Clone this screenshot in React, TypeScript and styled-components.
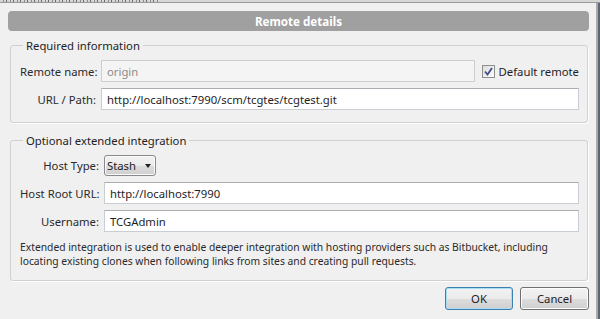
import styled, { createGlobalStyle } from 'styled-components';

const GlobalStyle = createGlobalStyle`
  html, body {
    margin: 0;
    padding: 0;
    background: #f0f0f0;
  }
  body {
    font-family: "Noto Sans", "Open Sans", sans-serif;
    font-size: 11.3px;
    color: #1e1e1e;
  }
`;

const Screen = styled.div`
  width: 600px;
  height: 319px;
  display: flex;
  flex-direction: column;
  overflow: hidden;
`;

// the window behind the dialog, only its last few pixels show
const BehindStrip = styled.div`
  height: 3px;
  background:
    repeating-linear-gradient(90deg, transparent 0 3px, #8a8a8a 3px 4px, transparent 4px 6px, #6a6a6a 6px 7px) 0 0 / 160px 2px no-repeat,
    #d6d6d6;
  border-bottom: 1px solid #9a9a9a;
  box-sizing: border-box;
`;

const Window = styled.div`
  flex: 1;
  display: flex;
`;

const Dialog = styled.div`
  flex: 1;
  display: flex;
  flex-direction: column;
  padding: 8px 7px 0 8px;
`;

const WindowEdge = styled.div`
  width: 4px;
  border-left: 2px solid #a9a9a9;
  background: #5c6570;
  box-sizing: border-box;
`;

const TitleBar = styled.div`
  height: 20px;
  border-radius: 4px;
  background: #a0a0a0;
  color: #fff;
  font-weight: bold;
  font-size: 11.6px;
  display: flex;
  align-items: center;
  justify-content: center;
`;

const Group = styled.fieldset<{ $top: number }>`
  margin: ${(p) => p.$top}px 1px 0 2px;
  min-width: 0;
  border: 1px solid #d0d0d0;
  border-radius: 3px;
  box-shadow: 1px 1px 0 #fff;
  padding: 7px 8px 12px 9px;
`;

const Legend = styled.legend`
  padding: 0 3px;
  margin-left: 3px;
  line-height: 15px;
  color: #1e1e1e;
`;

const FormGrid = styled.div<{ $labelWidth: number }>`
  display: grid;
  grid-template-columns: ${(p) => p.$labelWidth}px 1fr auto;
  column-gap: 5px;
  row-gap: 6px;
  align-items: center;
`;

const Label = styled.label`
  text-align: right;
  white-space: nowrap;
  color: #2a2a2a;
`;

const TextBox = styled.input<{ $span?: number }>`
  grid-column: span ${(p) => p.$span ?? 1};
  height: 22px;
  box-sizing: border-box;
  border: 1px solid #c9cdd4;
  border-top-color: #abadb3;
  background: #fff;
  padding: 0 5px;
  font: inherit;
  color: #1e1e1e;
  outline: none;

  &:disabled {
    background: #f4f4f4;
    border-color: #cdcdcd;
    color: #8c8c8c;
  }
`;

const CheckLabel = styled.label`
  display: flex;
  align-items: center;
  gap: 4px;
  margin-left: 2px;
  white-space: nowrap;
`;

const CheckBox = styled.span`
  width: 13px;
  height: 13px;
  box-sizing: border-box;
  border: 1px solid #8e8f8f;
  background: linear-gradient(135deg, #dcdcdc, #fdfdfd);
  display: flex;
  align-items: center;
  justify-content: center;
`;

const SelectCell = styled.div`
  grid-column: span 2;
`;

const Select = styled.div`
  width: 52px;
  height: 21px;
  box-sizing: border-box;
  border: 1px solid #8a8a8a;
  border-radius: 3px;
  background: linear-gradient(#f2f2f2 0%, #ebebeb 50%, #dddddd 51%, #cfcfcf 100%);
  box-shadow: inset 0 0 0 1px #fafafa;
  display: flex;
  align-items: center;
  justify-content: space-between;
  padding: 0 4px 0 2px;
`;

const Arrow = styled.span`
  width: 0;
  height: 0;
  border-left: 3.5px solid transparent;
  border-right: 3.5px solid transparent;
  border-top: 4px solid #222;
`;

const Note = styled.p`
  margin: 8px 0 0 0;
  font-size: 10.3px;
  line-height: 14px;
  color: #2a2a2a;

  span {
    display: block;
    white-space: nowrap;
  }
`;

const Buttons = styled.div`
  display: flex;
  justify-content: flex-end;
  gap: 7px;
  margin-top: 6px;
`;

const Button = styled.button<{ $primary?: boolean }>`
  width: ${(p) => (p.$primary ? 68 : 69)}px;
  height: 23px;
  border-radius: 3px;
  border: 1px solid ${(p) => (p.$primary ? '#3c7fb1' : '#707070')};
  background: linear-gradient(#f2f2f2 0%, #ebebeb 50%, #dddddd 51%, #cfcfcf 100%);
  box-shadow: inset 0 0 0 1px ${(p) => (p.$primary ? '#a8def4' : '#fcfcfc')};
  font: inherit;
  color: #1e1e1e;
  padding: 0;
`;

function App() {
  return (
    <Screen>
      <GlobalStyle />
      <BehindStrip />
      <Window>
        <Dialog>
          <TitleBar>Remote details</TitleBar>

          <Group $top={7}>
            <Legend>Required information</Legend>
            <FormGrid $labelWidth={76}>
              <Label>Remote name:</Label>
              <TextBox disabled value="origin" readOnly />
              <CheckLabel>
                <CheckBox>
                  <svg width="9" height="9" viewBox="0 0 9 9">
                    <path d="M1 4.5 L3.5 7.5 L8 1" fill="none" stroke="#3d4f8a" strokeWidth="1.8" />
                  </svg>
                </CheckBox>
                Default remote
              </CheckLabel>
              <Label>URL / Path:</Label>
              <TextBox $span={2} value="http://localhost:7990/scm/tcgtes/tcgtest.git" readOnly />
            </FormGrid>
          </Group>

          <Group $top={10}>
            <Legend>Optional extended integration</Legend>
            <FormGrid $labelWidth={79}>
              <Label>Host Type:</Label>
              <SelectCell>
                <Select>
                  Stash
                  <Arrow />
                </Select>
              </SelectCell>
              <Label>Host Root URL:</Label>
              <TextBox $span={2} value="http://localhost:7990" readOnly />
              <Label>Username:</Label>
              <TextBox $span={2} value="TCGAdmin" readOnly />
            </FormGrid>
            <Note>
              <span>
                Extended integration is used to enable deeper integration with hosting providers such as
                Bitbucket, including
              </span>
              <span>locating existing clones when following links from sites and creating pull requests.</span>
            </Note>
          </Group>

          <Buttons>
            <Button $primary>OK</Button>
            <Button>Cancel</Button>
          </Buttons>
        </Dialog>
        <WindowEdge />
      </Window>
    </Screen>
  );
}

export default App;
